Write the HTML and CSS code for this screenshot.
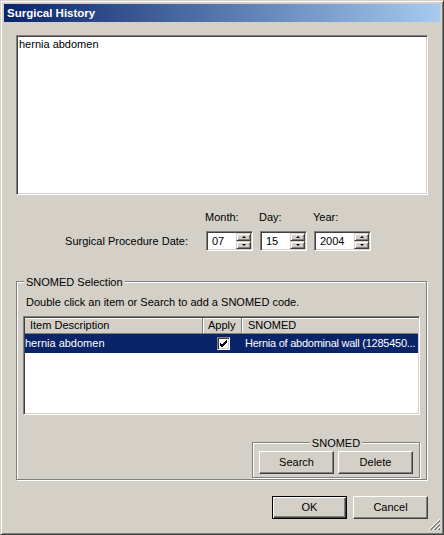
FILE: index.html
```html
<!DOCTYPE html>
<html>
<head>
<meta charset="utf-8">
<link rel="stylesheet" href="styles.css">
</head>
<body>
<div class="window">
  <div class="titlebar"><span class="title">Surgical History</span></div>
  <div class="client">
    <div class="textarea">hernia abdomen</div>

    <div class="date-grid">
      <span></span>
      <span class="cap">Month:</span>
      <span class="cap">Day:</span>
      <span class="cap">Year:</span>
      <span class="date-label">Surgical Procedure Date:</span>
      <div class="spin"><span class="spin-val">07</span><div class="spin-btns"><span class="sb"><i class="arr up"></i></span><span class="sb"><i class="arr down"></i></span></div></div>
      <div class="spin"><span class="spin-val">15</span><div class="spin-btns"><span class="sb"><i class="arr up"></i></span><span class="sb"><i class="arr down"></i></span></div></div>
      <div class="spin"><span class="spin-val">2004</span><div class="spin-btns"><span class="sb"><i class="arr up"></i></span><span class="sb"><i class="arr down"></i></span></div></div>
    </div>

    <div class="group main-group">
      <span class="group-title">SNOMED Selection</span>
      <div class="hint">Double click an item or Search to add a SNOMED code.</div>
      <div class="list">
        <div class="lv-header">
          <span class="hc c1">Item Description</span>
          <span class="hc c2">Apply</span>
          <span class="hc c3">SNOMED</span>
        </div>
        <div class="lv-row selected">
          <span class="rc c1">hernia abdomen</span>
          <span class="rc c2"><span class="check"><svg width="9" height="9" viewBox="0 0 9 9"><path d="M1 4 L3 6 L8 1 M1 5 L3 7 L8 2 M1 6 L3 8 L8 3" stroke="#000" stroke-width="1" fill="none"/></svg></span></span>
          <span class="rc c3">Hernia of abdominal wall (1285450...</span>
        </div>
      </div>
      <div class="group sub-group">
        <span class="group-title center">SNOMED</span>
        <div class="sub-buttons">
          <button class="btn">Search</button>
          <button class="btn">Delete</button>
        </div>
      </div>
    </div>

    <div class="dialog-buttons">
      <button class="btn default">OK</button>
      <button class="btn">Cancel</button>
    </div>
  </div>
  <svg class="grip" width="12" height="12" viewBox="0 0 12 12">
    <g stroke-width="1" shape-rendering="crispEdges">
      <line x1="11.5" y1="0.5" x2="0.5" y2="11.5" stroke="#fff"/>
      <line x1="11.5" y1="1.5" x2="1.5" y2="11.5" stroke="#808080"/>
      <line x1="11.5" y1="2.5" x2="2.5" y2="11.5" stroke="#808080"/>
      <line x1="11.5" y1="4.5" x2="4.5" y2="11.5" stroke="#fff"/>
      <line x1="11.5" y1="5.5" x2="5.5" y2="11.5" stroke="#808080"/>
      <line x1="11.5" y1="6.5" x2="6.5" y2="11.5" stroke="#808080"/>
      <line x1="11.5" y1="8.5" x2="8.5" y2="11.5" stroke="#fff"/>
      <line x1="11.5" y1="9.5" x2="9.5" y2="11.5" stroke="#808080"/>
      <line x1="11.5" y1="10.5" x2="10.5" y2="11.5" stroke="#808080"/>
    </g>
  </svg>
</div>
</body>
</html>
```

FILE: styles.css
```css
* { box-sizing: border-box; }
html, body { margin: 0; padding: 0; background: #d4d0c8; }
body {
  font-family: "Liberation Sans", Arial, sans-serif;
  font-size: 11px;
  line-height: 13px;
  color: #000;
}
.window {
  position: relative;
  width: 444px;
  height: 535px;
  background: #d4d0c8;
  border: 1px solid;
  border-color: #d4d0c8 #404040 #404040 #d4d0c8;
  box-shadow: inset 1px 1px 0 #fff, inset -1px -1px 0 #808080;
  padding: 3px;
  display: flex;
  flex-direction: column;
}
.titlebar {
  height: 18px;
  background: linear-gradient(to right, #0a246a, #a6caf0);
  display: flex;
  align-items: center;
  padding-left: 3px;
}
.title {
  color: #fff;
  font-weight: bold;
  font-size: 11.5px;
  line-height: 14px;
}
.client {
  flex: 1;
  padding: 13px 12px 0 12px;
  display: flex;
  flex-direction: column;
}
.textarea {
  height: 160px;
  background: #fff;
  border: 1px solid;
  border-color: #808080 #fff #fff #808080;
  box-shadow: inset 1px 1px 0 #404040, inset -1px -1px 0 #d4d0c8;
  padding: 2px 2px;
}
.date-grid {
  margin-top: 16px;
  display: grid;
  grid-template-columns: 183px 47px 47px 57px;
  column-gap: 7px;
  row-gap: 7px;
  align-items: center;
}
.cap { margin-left: -1px; }
.date-label {
  justify-self: end;
  padding-right: 11px;
}
.spin {
  height: 20px;
  background: #fff;
  border: 1px solid;
  border-color: #808080 #fff #fff #808080;
  box-shadow: inset 1px 1px 0 #404040, inset -1px -1px 0 #d4d0c8;
  padding: 2px 2px 2px 5px;
  display: flex;
  align-items: center;
  justify-content: space-between;
}
.spin-val { line-height: 13px; }
.spin-btns {
  width: 15px;
  height: 16px;
  display: flex;
  flex-direction: column;
  margin-right: -1px;
}
.sb {
  flex: 1;
  background: #d4d0c8;
  border: 1px solid;
  border-color: #d4d0c8 #404040 #404040 #d4d0c8;
  box-shadow: inset 1px 1px 0 #fff, inset -1px -1px 0 #808080;
  display: flex;
  align-items: center;
  justify-content: center;
}
.arr {
  display: block;
  width: 0;
  height: 0;
  border-left: 2px solid transparent;
  border-right: 2px solid transparent;
}
.arr.up { border-bottom: 2px solid #000; }
.arr.down { border-top: 2px solid #000; }

.group {
  border: 1px solid #808080;
  box-shadow: 1px 1px 0 #fff, inset 1px 1px 0 #fff;
  display: flex;
  flex-direction: column;
}
.main-group {
  margin-top: 30px;
  margin-right: 1px;
}
.group-title {
  align-self: flex-start;
  margin: -6px 0 0 7px;
  padding: 0 2px;
  background: #d4d0c8;
  line-height: 13px;
}
.group-title.center {
  align-self: center;
  margin-left: 0;
}
.hint {
  margin-top: 7px;
  padding-left: 9px;
}
.list {
  margin: 7px 6px 0 6px;
  height: 99px;
  background: #fff;
  border: 1px solid;
  border-color: #808080 #fff #fff #808080;
  box-shadow: inset 1px 1px 0 #404040, inset -1px -1px 0 #d4d0c8;
  padding: 1px 1px;
}
.lv-header {
  display: flex;
  height: 16px;
  background: #d4d0c8;
  border-bottom: 1px solid #808080;
  box-shadow: inset 0 1px 0 #fff;
}
.hc {
  line-height: 13px;
  padding: 1px 0 0 5px;
  border-right: 1px solid #808080;
  box-shadow: 1px 0 0 #fff;
}
.c1 { width: 178px; }
.c2 { width: 39px; }
.c3 { flex: 1; min-width: 0; }
.hc.c3 { border-right: 0; box-shadow: none; padding-left: 6px; }
.lv-row {
  display: flex;
  height: 19px;
  align-items: center;
}
.lv-row.selected { background: #0a246a; color: #fff; }
.rc { white-space: nowrap; overflow: hidden; }
.rc.c1 { padding-left: 0; }
.rc.c2 { display: flex; justify-content: center; padding-left: 2px; }
.rc.c3 { padding-left: 3px; letter-spacing: -0.25px; }
.check {
  width: 13px;
  height: 13px;
  background: #fff;
  border: 1px solid;
  border-color: #808080 #fff #fff #808080;
  box-shadow: inset 1px 1px 0 #404040, inset -1px -1px 0 #d4d0c8;
  display: flex;
  align-items: center;
  justify-content: center;
}
.check svg { display: block; }

.sub-group {
  align-self: flex-end;
  width: 168px;
  margin: 27px 6px 1px 0;
  padding: 0 6px 3px 6px;
}
.sub-buttons {
  display: flex;
  gap: 4px;
  margin-top: 1px;
}
.btn {
  width: 75px;
  height: 23px;
  font-family: inherit;
  font-size: 11px;
  line-height: 13px;
  color: #000;
  background: #d4d0c8;
  border: 1px solid;
  border-color: #fff #404040 #404040 #fff;
  box-shadow: inset -1px -1px 0 #808080, inset 1px 1px 0 #d4d0c8;
  padding: 0;
  margin: 0;
  border-radius: 0;
}
.btn.default {
  border: 1px solid #000;
  box-shadow: inset 1px 1px 0 #fff, inset -1px -1px 0 #404040, inset -2px -2px 0 #808080;
}
.dialog-buttons {
  display: flex;
  justify-content: flex-end;
  gap: 6px;
  margin-top: 16px;
}
.grip {
  position: absolute;
  right: 3px;
  bottom: 3px;
  display: block;
}
```
